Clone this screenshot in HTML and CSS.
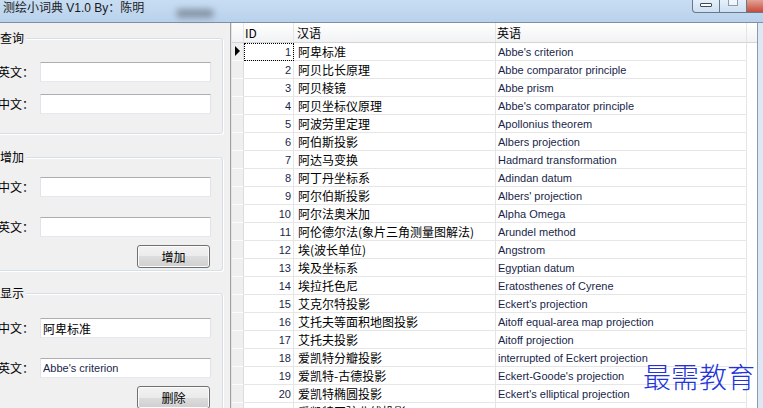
FILE: index.html
```html
<!DOCTYPE html>
<html lang="zh-CN">
<head>
  <meta charset="UTF-8">
  <title>测绘小词典 V1.0 By：陈明</title>
  <link rel="stylesheet" href="styles.css">
</head>
<body>
  <div class="window">
    <!-- 标题栏 -->
    <div class="titlebar">
      <span class="title">测绘小词典 V1.0 By：陈明</span>
      <span class="glass-blur"></span>
      <div class="caption-btns">
        <span class="cap-btn cap-min"><i></i></span>
        <span class="cap-btn cap-max"><i></i></span>
        <span class="cap-btn cap-close"></span>
      </div>
    </div>

    <div class="client">
      <!-- 左侧：查询 / 增加 / 显示 -->
      <div class="side">
        <div class="groups">
          <div class="group g-query">
            <div class="group-title">查询</div>
            <div class="field"><label>英文：</label><input class="tb" type="text"></div>
            <div class="field"><label>中文：</label><input class="tb" type="text"></div>
          </div>

          <div class="group g-add">
            <div class="group-title">增加</div>
            <div class="field"><label>中文：</label><input class="tb" type="text"></div>
            <div class="field"><label>英文：</label><input class="tb" type="text"></div>
            <div class="btn-row"><button type="button" class="btn">增加</button></div>
          </div>

          <div class="group g-show">
            <div class="group-title">显示</div>
            <div class="field"><label>中文：</label><input class="tb" type="text" value="阿卑标准"></div>
            <div class="field"><label>英文：</label><input class="tb en" type="text" value="Abbe's criterion"></div>
            <div class="btn-row"><button type="button" class="btn">删除</button></div>
          </div>
        </div>
      </div>

      <div class="splitter"></div>

      <!-- 右侧：词条表格 -->
      <div class="grid">
        <div class="grid-head">
          <div class="c-rh"></div>
          <div class="c-id">ID</div>
          <div class="c-zh">汉语</div>
          <div class="c-en">英语</div>
        </div>
        <div class="row cur"><div class="c-rh"><span class="arrow"></span></div><div class="c-id">1</div><div class="c-zh">阿卑标准</div><div class="c-en">Abbe's criterion</div></div>
        <div class="row"><div class="c-rh"></div><div class="c-id">2</div><div class="c-zh">阿贝比长原理</div><div class="c-en">Abbe comparator principle</div></div>
        <div class="row"><div class="c-rh"></div><div class="c-id">3</div><div class="c-zh">阿贝棱镜</div><div class="c-en">Abbe prism</div></div>
        <div class="row"><div class="c-rh"></div><div class="c-id">4</div><div class="c-zh">阿贝坐标仪原理</div><div class="c-en">Abbe's comparator principle</div></div>
        <div class="row"><div class="c-rh"></div><div class="c-id">5</div><div class="c-zh">阿波劳里定理</div><div class="c-en">Apollonius theorem</div></div>
        <div class="row"><div class="c-rh"></div><div class="c-id">6</div><div class="c-zh">阿伯斯投影</div><div class="c-en">Albers projection</div></div>
        <div class="row"><div class="c-rh"></div><div class="c-id">7</div><div class="c-zh">阿达马变换</div><div class="c-en">Hadmard transformation</div></div>
        <div class="row"><div class="c-rh"></div><div class="c-id">8</div><div class="c-zh">阿丁丹坐标系</div><div class="c-en">Adindan datum</div></div>
        <div class="row"><div class="c-rh"></div><div class="c-id">9</div><div class="c-zh">阿尔伯斯投影</div><div class="c-en">Albers' projection</div></div>
        <div class="row"><div class="c-rh"></div><div class="c-id">10</div><div class="c-zh">阿尔法奥米加</div><div class="c-en">Alpha Omega</div></div>
        <div class="row"><div class="c-rh"></div><div class="c-id">11</div><div class="c-zh">阿伦德尔法(象片三角测量图解法)</div><div class="c-en">Arundel method</div></div>
        <div class="row"><div class="c-rh"></div><div class="c-id">12</div><div class="c-zh">埃(波长单位)</div><div class="c-en">Angstrom</div></div>
        <div class="row"><div class="c-rh"></div><div class="c-id">13</div><div class="c-zh">埃及坐标系</div><div class="c-en">Egyptian datum</div></div>
        <div class="row"><div class="c-rh"></div><div class="c-id">14</div><div class="c-zh">埃拉托色尼</div><div class="c-en">Eratosthenes of Cyrene</div></div>
        <div class="row"><div class="c-rh"></div><div class="c-id">15</div><div class="c-zh">艾克尔特投影</div><div class="c-en">Eckert's projection</div></div>
        <div class="row"><div class="c-rh"></div><div class="c-id">16</div><div class="c-zh">艾托夫等面积地图投影</div><div class="c-en">Aitoff equal-area map projection</div></div>
        <div class="row"><div class="c-rh"></div><div class="c-id">17</div><div class="c-zh">艾托夫投影</div><div class="c-en">Aitoff projection</div></div>
        <div class="row"><div class="c-rh"></div><div class="c-id">18</div><div class="c-zh">爱凯特分瓣投影</div><div class="c-en">interrupted of Eckert projection</div></div>
        <div class="row"><div class="c-rh"></div><div class="c-id">19</div><div class="c-zh">爱凯特-古德投影</div><div class="c-en">Eckert-Goode's projection</div></div>
        <div class="row"><div class="c-rh"></div><div class="c-id">20</div><div class="c-zh">爱凯特椭圆投影</div><div class="c-en">Eckert's elliptical projection</div></div>
        <div class="row"><div class="c-rh"></div><div class="c-id">21</div><div class="c-zh">爱凯特正弦曲线投影</div><div class="c-en">Eckert's sinusoidal projection</div></div>
      </div>

      <div class="frame-right"></div>
    </div>

    <div class="watermark">最需教育</div>
  </div>
</body>
</html>
```

FILE: styles.css
```css
* {
  box-sizing: border-box;
}

html,
body {
  margin: 0;
}

body {
  width: 763px;
  height: 408px;
  overflow: hidden;
  font: 12px/14px "Noto Sans CJK SC", sans-serif;
  color: #000;
  background: #fff;
}

.window {
  position: relative;
  height: 408px;
  display: flex;
  flex-direction: column;
}

/* 标题栏 */
.titlebar {
  position: relative;
  flex: none;
  height: 23px;
  display: flex;
  align-items: flex-start;
  background: linear-gradient(#c7ddf3, #b9d1eb);
  border-bottom: 1px solid #7f8fa3;
}

.title {
  padding: 1px 0 0 3px;
  line-height: 14px;
  font-family: "Liberation Sans", "Noto Sans CJK SC", sans-serif;
  font-size: 12px;
  color: #1b1b1b;
}

.glass-blur {
  position: absolute;
  left: 176px;
  top: 9px;
  width: 38px;
  height: 9px;
  border-radius: 5px;
  background: #6f7b88;
  filter: blur(3px);
  opacity: 0.7;
}

.caption-btns {
  margin-left: auto;
  display: flex;
  height: 13px;
}

.cap-btn {
  height: 13px;
  display: flex;
  justify-content: center;
  border: 1px solid #6a7889;
  border-top: none;
  background: linear-gradient(rgba(255, 255, 255, 0.55), rgba(255, 255, 255, 0.2));
  overflow: hidden;
}

.cap-min {
  width: 28px;
  border-radius: 0 0 0 4px;
}

.cap-min i {
  width: 12px;
  height: 4px;
  margin-top: 3px;
  background: #fff;
  border: 1px solid #3a4a5c;
  border-radius: 1px;
}

.cap-max {
  width: 27px;
  border-left: none;
}

.cap-max i {
  width: 10px;
  height: 8px;
  margin-top: -2px;
  border: 1px solid #8e9cad;
  background: rgba(255, 255, 255, 0.5);
}

.cap-close {
  width: 16px;
  border-left: none;
  border-right: none;
  background: linear-gradient(#e2a394, #c74a3a);
}

/* 主体 */
.client {
  flex: 1;
  display: flex;
  min-height: 0;
}

.side {
  width: 230px;
  flex: none;
  background: #f0f0f0;
  overflow: hidden;
}

.splitter {
  width: 2px;
  flex: none;
  border-left: 1px solid #a0a0a0;
  background: #e4e4e4;
}

.groups {
  width: 229px;
  margin-left: -6px;
  padding-top: 15px;
}

.group {
  border: 1px solid #d5dfe5;
  border-radius: 3px;
  box-shadow: inset 1px 1px 0 #fff, 1px 1px 0 #fff;
}

.group-title {
  width: fit-content;
  margin: -8px 0 0 4px;
  padding: 0 2px 0 1px;
  line-height: 14px;
  background: #f0f0f0;
}

.field {
  display: flex;
  align-items: center;
  height: 20px;
  padding: 0 11px 0 3px;
}

.field label {
  flex: 1;
  white-space: nowrap;
}

.tb {
  width: 171px;
  height: 20px;
  margin: 0;
  padding: 0 2px;
  border: 1px solid;
  border-color: #abadb3 #e2e3ea #e3e9ef #e2e3ea;
  background: #fff;
  font: 12px "Noto Sans CJK SC", sans-serif;
  color: #000;
  outline: none;
}

.tb.en {
  font: 11px "Liberation Sans", sans-serif;
  color: #1a1f4a;
}

.g-query .field:nth-of-type(2) { margin-top: 17px; }
.g-query .field:nth-of-type(3) { margin-top: 12px; }
.g-query { padding-bottom: 19px; }

.g-add { margin-top: 23px; padding-bottom: 2px; }
.g-add .field:nth-of-type(2) { margin-top: 13px; }
.g-add .field:nth-of-type(3) { margin-top: 20px; }

.g-show { margin-top: 22px; }
.g-show .field:nth-of-type(2) { margin-top: 18px; }
.g-show .field:nth-of-type(3) { margin-top: 20px; }

.btn-row {
  display: flex;
  justify-content: flex-end;
  margin-top: 8px;
  padding-right: 12px;
}

.btn {
  width: 73px;
  height: 23px;
  padding: 0;
  border: 1px solid #707070;
  border-radius: 3px;
  background: linear-gradient(#f2f2f2, #ebebeb 50%, #dddddd 50%, #cfcfcf);
  box-shadow: inset 0 0 0 1px #fcfcfc;
  font: 12px "Noto Sans CJK SC", sans-serif;
  color: #000;
}

/* 表格 */
.grid {
  width: 525px;
  flex: none;
  background: #fff;
  overflow: hidden;
}

.grid-head,
.row {
  display: flex;
}

.grid-head {
  height: 20px;
  line-height: 20px;
  border-bottom: 1px solid #d5d5d5;
  background: linear-gradient(#fff, #f1f2f4);
}

.row {
  height: 18px;
  line-height: 18px;
}

.c-rh,
.c-id,
.c-zh,
.c-en {
  flex: none;
  border-right: 1px solid #e5e5e5;
  white-space: nowrap;
  overflow: hidden;
}

.c-rh { width: 12px; }
.c-id { width: 50px; }
.c-zh { width: 202px; }
.c-en { width: 251px; }

.grid-head .c-id { padding-left: 1px; }
.grid-head .c-zh { padding-left: 3px; }
.grid-head .c-en { padding-left: 1px; }

.row > div {
  border-bottom: 1px solid #e6e6e6;
}

.row .c-rh {
  background: #efefef;
  border-bottom-color: #fbfbfb;
  border-right-color: #dcdcdc;
}

.row .c-id {
  text-align: right;
  padding-right: 2px;
  font: 11px/18px "Liberation Sans", sans-serif;
  color: #1a1f4a;
}

.row .c-zh {
  padding-left: 4px;
}

.row .c-en {
  padding-left: 2px;
  font: 11px/18px "Liberation Sans", sans-serif;
  color: #1a1f4a;
}

.row.cur .c-id {
  outline: 1px dotted #000;
  outline-offset: -1px;
}

.arrow {
  display: block;
  width: 0;
  height: 0;
  margin: 3px 0 0 3px;
  border-left: 5px solid #000;
  border-top: 5px solid transparent;
  border-bottom: 5px solid transparent;
}

.frame-right {
  flex: 1;
  border-left: 1px solid #8d9aa8;
  background: #dce8f5;
}

/* 水印 */
.watermark {
  position: absolute;
  left: 643px;
  top: 362px;
  font-size: 28px;
  font-weight: 300;
  line-height: 28px;
  color: #2233dd;
  white-space: nowrap;
}
```
